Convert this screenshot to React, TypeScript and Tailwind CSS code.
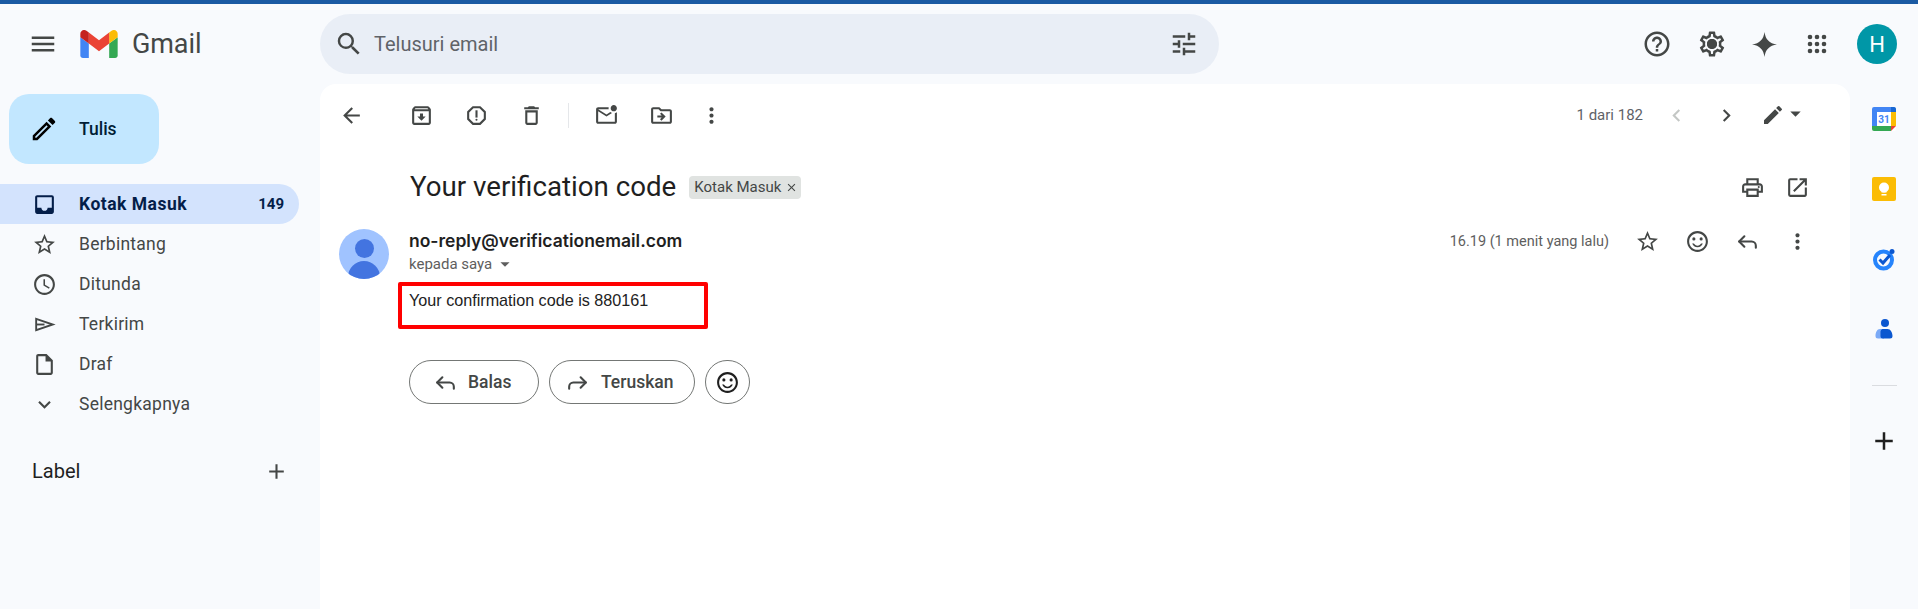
import React from 'react';
import { Forward, Reply } from 'lucide-react';
import {
    MdAdd, MdArrowBack, MdArrowDropDown, MdChevronLeft, MdChevronRight, MdClose, MdEdit, MdExpandMore, MdHelpOutline,
    MdInbox, MdMenu, MdMoreVert, MdOpenInNew, MdOutlineArchive, MdOutlineDelete, MdOutlineDriveFileMove, MdOutlineEdit,
    MdOutlineInsertDriveFile, MdOutlineMarkEmailUnread, MdOutlinePrint, MdOutlineReport, MdOutlineSchedule,
    MdOutlineSentimentSatisfied, MdOutlineSettings, MdSearch, MdStarBorder, MdTune,
} from 'react-icons/md';

function GmailLogo() {
    return (
        <svg viewBox="52 42 88 66" className="h-[28px] w-[38px]" aria-hidden="true">
            <path fill="#4285f4" d="M58 108h14V74L52 59v43c0 3.32 2.69 6 6 6" />
            <path fill="#34a853" d="M120 108h14c3.32 0 6-2.69 6-6V59l-20 15" />
            <path fill="#fbbc04" d="M120 48v26l20-15v-8c0-7.42-8.47-11.65-14.4-7.2" />
            <path fill="#ea4335" d="M72 74V48l24 18 24-18v26L96 92" />
            <path fill="#c5221f" d="M52 51v8l20 15V48l-5.6-4.2c-5.94-4.45-14.4-.22-14.4 7.2" />
        </svg>
    );
}

function Sparkle() {
    return (
        <svg viewBox="0 0 24 24" className="h-[25px] w-[25px]" fill="#444746" aria-hidden="true">
            <path d="M12 0c.9 7 4.6 11 12 12-7.4 1-11.1 5-12 12-.9-7-4.6-11-12-12 7.400-1 11.100-5 12-12z" />
        </svg>
    );
}

function AppsDots() {
    const dots = [3, 10, 17];
    return (
        <svg viewBox="0 0 20 20" className="h-[20px] w-[20px]" fill="#444746" aria-hidden="true">
            {dots.map((y) => dots.map((x) => <circle key={`${x}-${y}`} cx={x} cy={y} r="2.300" />))}
        </svg>
    );
}

function SendIcon() {
    return (
        <svg viewBox="0 0 24 24" className="h-[25px] w-[25px]" fill="none" stroke="currentColor" strokeWidth="1.800" aria-hidden="true">
            <path d="M4 6.500 20 12 4 17.500z" />
            <path d="M4 12h8" />
        </svg>
    );
}

function CalendarIcon() {
    return (
        <svg viewBox="0 0 24 24" className="h-[24px] w-[24px]" aria-hidden="true">
            <rect width="24" height="24" rx="2" fill="#fff" />
            <path fill="#4285f4" d="M2 0h20l2 2v3H5v14H0V2a2 2 0 0 1 2-2z" />
            <path fill="#1967d2" d="M19 0h3a2 2 0 0 1 2 2v3h-5z" />
            <path fill="#fbbc04" d="M19 5h5v14h-5z" />
            <path fill="#34a853" d="M0 19h19v5H2a2 2 0 0 1-2-2z" />
            <path fill="#ea4335" d="M19 19h5l-5 5z" />
            <text x="12" y="15.500" textAnchor="middle" fontSize="10" fontWeight="700" fontFamily="Roboto" fill="#4285f4">31</text>
        </svg>
    );
}

function KeepIcon() {
    return (
        <svg viewBox="0 0 24 24" className="h-[24px] w-[24px]" aria-hidden="true">
            <rect width="24" height="24" rx="2" fill="#fbbc04" />
            <circle cx="12" cy="10.500" r="5" fill="#fff" />
            <path fill="#fff" d="M9.500 13h5v2.500h-5zM9.500 17h5v1.500h-5z" />
        </svg>
    );
}

function TasksIcon() {
    return (
        <svg viewBox="0 0 24 24" className="h-[24px] w-[24px]" fill="none" aria-hidden="true">
            <circle cx="11.500" cy="13" r="8.500" stroke="#2684fc" strokeWidth="4" />
            <path d="M7.500 12.500l3.500 3.500 7-8" stroke="#0b57d0" strokeWidth="3" />
            <circle cx="20" cy="4.500" r="2.500" fill="#0b57d0" />
        </svg>
    );
}

function ContactsIcon() {
    return (
        <svg viewBox="0 0 24 24" className="h-[24px] w-[24px]" aria-hidden="true">
            <circle cx="13" cy="6" r="4" fill="#0b57d0" />
            <path fill="#7baaf7" d="M8 12h4v9.500H6A2.500 2.500 0 0 1 3.500 19c0-3.500 1.500-7 4.500-7z" />
            <path fill="#0b57d0" d="M10.500 12h5c3 0 5 3.500 5 7a2.500 2.500 0 0 1-2.500 2.500h-7A2.500 2.500 0 0 1 8.500 19v-4.500a3 3 0 0 1 2-2.500z" />
        </svg>
    );
}

const navItems = [
    { icon: <MdStarBorder className="h-[25px] w-[25px]" />, label: 'Berbintang' },
    { icon: <MdOutlineSchedule className="h-[25px] w-[25px]" />, label: 'Ditunda' },
    { icon: <SendIcon />, label: 'Terkirim' },
    { icon: <MdOutlineInsertDriveFile className="h-[25px] w-[25px]" />, label: 'Draf' },
    { icon: <MdExpandMore className="h-[25px] w-[25px]" />, label: 'Selengkapnya' },
];

function Sidebar() {
    return (
        <aside className="flex w-[320px] shrink-0 flex-col">
            <button className="ml-[9px] mt-[10px] flex h-[70px] w-[150px] items-center rounded-[20px] bg-[#c2e7ff] pl-[20px] text-[#001d35]">
                <MdOutlineEdit className="h-[30px] w-[30px] text-black" />
                <span className="ml-[20px] text-[17.500px] font-medium">Tulis</span>
            </button>
            <nav className="mt-[20px] flex flex-col">
                <div className="flex h-[40px] w-[299px] items-center rounded-r-full bg-[#d3e3fd] pl-[32px] pr-[15px] font-bold text-[#041e49]">
                    <MdInbox className="h-[25px] w-[25px]" />
                    <span className="ml-[22px] flex-1 text-[17.500px] tracking-[0.5px]">Kotak Masuk</span>
                    <span className="text-[15px]">149</span>
                </div>
                {navItems.map((item) => (
                    <div key={item.label} className="flex h-[40px] items-center pl-[32px] text-[#444746]">
                        {item.icon}
                        <span className="ml-[22px] text-[17.500px] tracking-[0.25px]">{item.label}</span>
                    </div>
                ))}
            </nav>
            <div className="mt-[32px] flex items-center justify-between pl-[32px] pr-[31px] text-[#1f1f1f]">
                <span className="text-[20px]">Label</span>
                <MdAdd className="h-[25px] w-[25px] text-[#444746]" />
            </div>
        </aside>
    );
}

function Header() {
    return (
        <header className="flex h-[80px] shrink-0 items-center text-[#444746]">
            <div className="flex w-[320px] shrink-0 items-center pl-[28px]">
                <MdMenu className="h-[30px] w-[30px]" />
                <div className="ml-[22px] flex"><GmailLogo /></div>
                <span className="ml-[14px] text-[27px] leading-none tracking-[-0.1px] text-[#444746]">Gmail</span>
            </div>
            <div className="flex h-[60px] w-[899px] items-center rounded-full bg-[#e9eef6] pl-[14px] pr-[20px]">
                <MdSearch className="h-[30px] w-[30px]" />
                <span className="ml-[10px] flex-1 text-[20px] text-[#5f6368]">Telusuri email</span>
                <MdTune className="h-[30px] w-[30px]" />
            </div>
            <div className="ml-[410px] flex items-center">
                <div className="flex w-[55px] justify-center"><MdHelpOutline className="h-[30px] w-[30px]" /></div>
                <div className="relative flex w-[55px] items-center justify-center">
                    <MdOutlineSettings className="h-[30px] w-[30px]" />
                    <div className="absolute h-[10px] w-[10px] rounded-full bg-[#444746]" />
                </div>
                <div className="flex w-[51px] justify-center"><Sparkle /></div>
                <div className="flex w-[54px] justify-center"><AppsDots /></div>
                <div className="ml-[13px] flex h-[40px] w-[40px] items-center justify-center rounded-full bg-[#0097a7] text-[22px] text-white">H</div>
            </div>
        </header>
    );
}

function ToolbarButton({ children, width = 'w-[55px]' }: { children: React.ReactNode; width?: string }) {
    return <button className={`flex h-[50px] ${width} items-center justify-center text-[#444746]`}>{children}</button>;
}

const toolIcon = 'h-[25px] w-[25px]';

function Toolbar() {
    return (
        <div className="flex h-[62px] items-center pl-[4px] pr-[42px]">
            <ToolbarButton><MdArrowBack className={toolIcon} /></ToolbarButton>
            <div className="ml-[15px] flex items-center">
                <ToolbarButton><MdOutlineArchive className={toolIcon} /></ToolbarButton>
                <ToolbarButton><MdOutlineReport className={toolIcon} /></ToolbarButton>
                <ToolbarButton><MdOutlineDelete className={toolIcon} /></ToolbarButton>
                <div className="ml-[9px] mr-[10px] h-[25px] w-px bg-[#e5e7ea]" />
                <ToolbarButton><MdOutlineMarkEmailUnread className={toolIcon} /></ToolbarButton>
                <ToolbarButton><MdOutlineDriveFileMove className={toolIcon} /></ToolbarButton>
                <ToolbarButton width="w-[45px]"><MdMoreVert className={toolIcon} /></ToolbarButton>
            </div>
            <div className="ml-auto flex items-center">
                <span className="mr-[8px] text-[15px] text-[#5f6368]">1 dari 182</span>
                <ToolbarButton width="w-[50px]"><MdChevronLeft className="h-[25px] w-[25px] text-[#c4c7c5]" /></ToolbarButton>
                <ToolbarButton width="w-[50px]"><MdChevronRight className={toolIcon} /></ToolbarButton>
                <div className="ml-[10px] flex items-center text-[#444746]">
                    <MdEdit className="h-[24px] w-[24px]" />
                    <MdArrowDropDown className="-ml-[2px] -mt-[4px] h-[25px] w-[25px]" />
                </div>
            </div>
        </div>
    );
}

function Subject() {
    return (
        <div className="mt-[16px] flex h-[50px] items-center pl-[90px] pr-[30px]">
            <h1 className="text-[27.700px] leading-none text-[#1f1f1f]">Your verification code</h1>
            <span className="ml-[13px] flex h-[23px] w-[112px] items-center rounded-[4px] bg-[#e0e3e1] pl-[5px] text-[15px] text-[#444746]">
                Kotak Masuk
                <MdClose className="ml-[4px] h-[13px] w-[13px]" />
            </span>
            <div className="ml-auto flex items-center text-[#444746]">
                <div className="flex w-[45px] justify-center"><MdOutlinePrint className={toolIcon} /></div>
                <div className="flex w-[45px] justify-center"><MdOpenInNew className={toolIcon} /></div>
            </div>
        </div>
    );
}

function Message() {
    return (
        <div className="flex pl-[19px]">
            <div className="h-[50px] w-[50px] shrink-0 overflow-hidden rounded-full bg-[#a0c3ff]">
                <div className="mx-auto mt-[10px] h-[19px] w-[19px] rounded-full bg-[#4374e0]" />
                <div className="mx-auto mt-[3px] h-[20px] w-[32px] rounded-t-full bg-[#4374e0]" />
            </div>
            <div className="ml-[9px] flex-1">
                <div className="flex items-start justify-between pr-[28px]">
                    <div className="pl-[11px]">
                        <div className="font-['Inter',sans-serif] text-[17.500px] font-semibold leading-[24px] text-[#1f1f1f]">no-reply@verificationemail.com</div>
                        <div className="flex items-center text-[15px] leading-[20px] text-[#5e5e5e]">
                            kepada saya
                            <MdArrowDropDown className="ml-[2px] h-[22px] w-[22px]" />
                        </div>
                    </div>
                    <div className="flex items-center text-[#444746]">
                        <span className="mr-[13px] text-[14.500px] text-[#5e5e5e]">16.19 (1 menit yang lalu)</span>
                        <div className="flex w-[50px] justify-center"><MdStarBorder className={toolIcon} /></div>
                        <div className="flex w-[50px] justify-center"><MdOutlineSentimentSatisfied className={toolIcon} /></div>
                        <div className="flex w-[50px] justify-center"><Reply className={toolIcon} strokeWidth={2} /></div>
                        <div className="flex w-[50px] justify-center"><MdMoreVert className={toolIcon} /></div>
                    </div>
                </div>
                <div className="mt-[7px] h-[47px] w-[310px] rounded-[2px] border-4 border-[#ff0000] pl-[7px] pt-[2px] font-['Liberation_Sans',Arial,sans-serif] text-[16.160px] leading-[24px] text-[#222222]">
                    Your confirmation code is 880161
                </div>
                <div className="ml-[11px] mt-[31px] flex gap-[10px] text-[17.500px] font-medium text-[#444746]">
                    <button className="flex h-[44px] w-[130px] items-center rounded-full border border-[#747775] pl-[23px]">
                        <Reply className="h-[25px] w-[25px]" strokeWidth={2} />
                        <span className="ml-[10px]">Balas</span>
                    </button>
                    <button className="flex h-[44px] w-[146px] items-center rounded-full border border-[#747775] pl-[15px]">
                        <Forward className="h-[25px] w-[25px]" strokeWidth={2} />
                        <span className="ml-[11px]">Teruskan</span>
                    </button>
                    <button className="flex h-[44px] w-[45px] items-center justify-center rounded-full border border-[#747775]">
                        <MdOutlineSentimentSatisfied className="h-[25px] w-[25px] text-[#1f1f1f]" />
                    </button>
                </div>
            </div>
        </div>
    );
}

function SidePanel() {
    return (
        <aside className="flex w-[68px] shrink-0 flex-col items-center pt-[23px]">
            <div className="flex flex-col items-center gap-[46px]">
                <CalendarIcon />
                <KeepIcon />
                <TasksIcon />
                <ContactsIcon />
            </div>
            <div className="mt-[44px] h-px w-[25px] bg-[#dadce0]" />
            <MdAdd className="mt-[40px] h-[30px] w-[30px] text-[#1f1f1f]" />
        </aside>
    );
}

export default function App() {
    return (
        <div className="flex h-[609px] w-full flex-col overflow-hidden bg-[#f8fafd] font-['Roboto',sans-serif]">
            <div className="h-[4px] shrink-0 bg-[#1a5aa3]" />
            <Header />
            <div className="flex min-h-0 flex-1">
                <Sidebar />
                <main className="flex-1 rounded-t-2xl bg-white">
                    <Toolbar />
                    <Subject />
                    <div className="mt-[17px]"><Message /></div>
                </main>
                <SidePanel />
            </div>
        </div>
    );
}
